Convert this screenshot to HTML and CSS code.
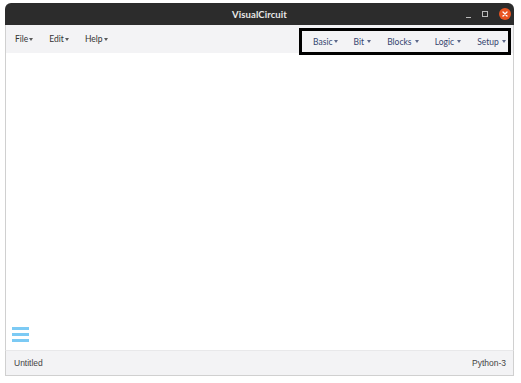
FILE: index.html
```html
<!DOCTYPE html>
<html>
<head>
<meta charset="utf-8">
<link rel="stylesheet" href="styles.css">
</head>
<body>
<div class="window">
  <div class="titlebar">
    <div class="title">VisualCircuit</div>
    <div class="controls">
      <span class="ctl-min"></span>
      <span class="ctl-max"></span>
      <span class="ctl-close">
        <svg width="12" height="12" viewBox="0 0 12 12"><circle cx="6" cy="6" r="6" fill="#e95420"/><path d="M4 4 L8 8 M8 4 L4 8" stroke="#fff" stroke-width="1.3" stroke-linecap="round"/></svg>
      </span>
    </div>
  </div>
  <div class="menubar">
    <div class="menu-left">
      <span class="mi">File<i class="caret"></i></span>
      <span class="mi">Edit<i class="caret"></i></span>
      <span class="mi">Help<i class="caret"></i></span>
    </div>
    <div class="menu-right">
      <span class="mr">Basic<i class="caret"></i></span>
      <span class="mr">Bit <i class="caret sp"></i></span>
      <span class="mr">Blocks <i class="caret sp"></i></span>
      <span class="mr">Logic <i class="caret sp"></i></span>
      <span class="mr">Setup <i class="caret sp"></i></span>
    </div>
  </div>
  <div class="content">
    <div class="hamburger"><span></span><span></span><span></span></div>
  </div>
  <div class="statusbar">
    <span>Untitled</span>
    <span>Python-3</span>
  </div>
</div>
</body>
</html>
```
FILE: styles.css
```css
html, body { margin: 0; padding: 0; background: #fff; }
body { padding: 3px 0 0 5px; }
.window {
  width: 509px;
  display: flex;
  flex-direction: column;
}
.titlebar {
  height: 22px;
  background: #2c2c2c;
  border-radius: 6px 6px 0 0;
  display: flex;
  align-items: center;
  justify-content: center;
  position: relative;
}
.title {
  color: #e8e8e8;
  font-family: "Lato", sans-serif;
  font-weight: bold;
  font-size: 9.5px;
  letter-spacing: 0.1px;
}
.controls {
  position: absolute;
  right: 3px;
  top: 5px;
  display: flex;
  align-items: center;
  height: 12px;
}
.ctl-min {
  width: 5px; height: 1px; background: #bbb; margin-top: 6px; margin-right: 11px;
}
.ctl-max {
  width: 4px; height: 4px; border: 1px solid #bbb; margin-right: 11px;
}
.ctl-close svg { display: block; }
.menubar {
  height: 28px;
  background: #f3f3f5;
  border-left: 1px solid #d0d0d0;
  border-right: 1px solid #d0d0d0;
  display: flex;
  justify-content: space-between;
  align-items: flex-start;
  position: relative;
  z-index: 1;
}
.menu-left {
  display: flex;
  gap: 16px;
  padding-left: 9px;
  height: 28px;
  align-items: center;
}
.mi, .mr {
  font-family: "Lato", sans-serif;
  font-size: 8.5px;
  color: #333;
  display: inline-flex;
  align-items: center;
  white-space: pre;
}
.mr { color: #34446e; }
.caret {
  display: inline-block;
  width: 0; height: 0;
  border-left: 2.5px solid transparent;
  border-right: 2.5px solid transparent;
  border-top: 3px solid currentColor;
  margin-left: 1px;
  opacity: 0.8;
}
.caret.sp { margin-left: 1px; }
.menu-right {
  margin-top: 3px;
  margin-right: 2px;
  height: 21px;
  border: 3px solid #000;
  display: flex;
  align-items: center;
  gap: 16px;
  padding: 0 2px 0 11px;
  background: #f3f3f5;
}
.content {
  height: 297px;
  background: #fff;
  border-left: 1px solid #d0d0d0;
  border-right: 1px solid #d0d0d0;
  display: flex;
  flex-direction: column;
  justify-content: flex-end;
  padding: 0 0 8px 6px;
  box-sizing: border-box;
}
.hamburger {
  width: 17px;
  display: flex;
  flex-direction: column;
  gap: 3px;
}
.hamburger span {
  height: 3px;
  background: #7ccaf4;
}
.statusbar {
  height: 26px;
  background: #f3f3f5;
  border: 1px solid #d0d0d0;
  border-top: 1px solid #e8e8ea;
  box-sizing: border-box;
  display: flex;
  justify-content: space-between;
  align-items: center;
  padding: 0 7px 0 8px;
  font-family: "Liberation Sans", Arial, sans-serif;
  font-size: 8.5px;
  color: #444;
}
```
